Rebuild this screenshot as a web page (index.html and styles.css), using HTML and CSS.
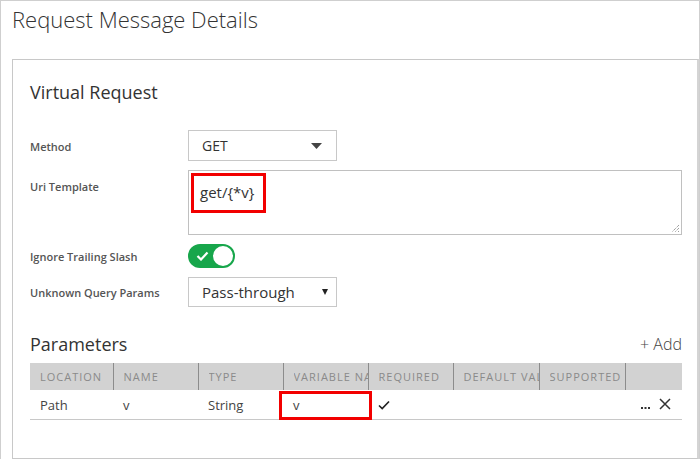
FILE: index.html
```html
<!DOCTYPE html>
<html>
<head>
<meta charset="utf-8">
<link rel="stylesheet" href="styles.css">
</head>
<body>
<div class="frame">
  <div class="page-head"><h1 class="page-title">Request Message Details</h1></div>
  <div class="card">
    <h2 class="section-title">Virtual Request</h2>
    <div class="form">
      <div class="label">Method</div>
      <div class="field">
        <div class="select method">
          <span>GET</span>
          <svg class="caret" width="11" height="6" viewBox="0 0 11 6"><path d="M0 0h11L5.5 6z" fill="#444"/></svg>
        </div>
      </div>
      <div class="label label-top">Uri Template</div>
      <div class="field">
        <div class="textarea">
          <span class="highlight">get/{*v}</span>
          <svg class="grip" width="9" height="9" viewBox="0 0 9 9"><path d="M8 1L1 8M8 4L4 8M8 7L7 8" stroke="#777" stroke-width="1" stroke-dasharray="1 1"/></svg>
        </div>
      </div>
      <div class="label">Ignore Trailing Slash</div>
      <div class="field">
        <div class="toggle">
          <svg class="tick" width="13" height="10" viewBox="0 0 13 10"><path d="M1.5 5l3.5 3.5L11.5 1.5" fill="none" stroke="#fff" stroke-width="2.2"/></svg>
          <span class="knob"></span>
        </div>
      </div>
      <div class="label">Unknown Query Params</div>
      <div class="field">
        <div class="select passthrough">
          <span>Pass-through</span>
          <svg class="caret-small" width="6" height="6" viewBox="0 0 6 6"><path d="M0 0h6L3 6z" fill="#222"/></svg>
        </div>
      </div>
    </div>
    <div class="params-head">
      <h2 class="section-title params-title">Parameters</h2>
      <span class="add">+ Add</span>
    </div>
    <table class="params">
      <colgroup>
        <col class="c1"><col class="c2"><col class="c2"><col class="c2"><col class="c2"><col class="c3"><col class="c3"><col class="c4">
      </colgroup>
      <thead>
        <tr>
          <th><span class="hd">LOCATION</span></th><th><span class="hd">NAME</span></th><th><span class="hd">TYPE</span></th><th><span class="hd">VARIABLE NAME</span></th><th><span class="hd">REQUIRED</span></th><th><span class="hd">DEFAULT VALUE</span></th><th><span class="hd">SUPPORTED</span></th><th class="last"></th>
        </tr>
      </thead>
      <tbody>
        <tr>
          <td>Path</td><td>v</td><td>String</td><td class="marked">v</td>
          <td><svg width="12" height="10" viewBox="0 0 12 10"><path d="M1 5.5l3.2 3L11 1.5" fill="none" stroke="#222" stroke-width="1.7"/></svg></td>
          <td></td><td></td>
          <td class="actions">
            <svg width="9" height="4" viewBox="0 0 9 4"><rect x="0" y="1" width="2" height="2" fill="#333"/><rect x="3.5" y="1" width="2" height="2" fill="#333"/><rect x="7" y="1" width="2" height="2" fill="#333"/></svg>
            <svg width="12" height="12" viewBox="0 0 12 12"><path d="M1 1l10 10M11 1L1 11" stroke="#333" stroke-width="1.5"/></svg>
          </td>
        </tr>
      </tbody>
    </table>
  </div>
</div>
</body>
</html>
```
FILE: styles.css
```css
html, body {
  margin: 0;
  padding: 0;
  background: #fff;
}
body {
  font-family: "Open Sans", "Noto Sans", sans-serif;
  color: #333;
}
.frame {
  width: 700px;
  height: 459px;
  box-sizing: border-box;
  border: 1px solid #cfcfcf;
  border-bottom: none;
  display: flex;
  flex-direction: column;
  overflow: hidden;
}
.page-head {
  height: 58px;
  padding-left: 11px;
}
.page-title {
  margin: 0;
  font-weight: 300;
  font-size: 22px;
  line-height: 30px;
  padding-top: 3px;
  color: #333;
}
.card {
  flex: 1;
  margin-left: 11px;
  border: 1px solid #c8c8c8;
  border-right: 2px solid #d4d4d4;
  padding: 19px 15px 0 17px;
}
.section-title {
  margin: 0;
  font-weight: 400;
  font-size: 18px;
  line-height: 26px;
  color: #333;
}
.form {
  margin-top: 25px;
  display: grid;
  grid-template-columns: 158px 1fr;
  grid-template-rows: 31px 65px 24px 30px;
  row-gap: 9px;
}
.label {
  font-size: 11px;
  font-weight: 600;
  color: #555;
  display: flex;
  align-items: center;
  padding-top: 1px;
}
.label-top {
  align-items: flex-start;
  padding-top: 9px;
}
.select {
  width: 149px;
  height: 31px;
  box-sizing: border-box;
  border: 1px solid #c8c8c8;
  display: flex;
  align-items: center;
  justify-content: space-between;
  padding: 0 14px 0 13px;
  font-size: 14px;
  color: #333;
}
.passthrough {
  height: 30px;
  font-size: 15px;
  padding-right: 8px;
}
.textarea {
  position: relative;
  height: 65px;
  box-sizing: border-box;
  border: 1px solid #c0c0c0;
  padding: 2px;
}
.highlight {
  display: inline-block;
  border: 3px solid #f20000;
  height: 40px;
  box-sizing: border-box;
  line-height: 33px;
  padding: 0 9px 0 6px;
  font-size: 15px;
  color: #333;
}
.grip {
  position: absolute;
  right: 1px;
  bottom: 1px;
}
.toggle {
  width: 47px;
  height: 24px;
  border-radius: 12px;
  background: #17a64b;
  display: flex;
  align-items: center;
  justify-content: space-between;
  padding: 0 2px 0 8px;
  box-sizing: border-box;
}
.knob {
  width: 20px;
  height: 20px;
  border-radius: 50%;
  background: #fff;
}
.params-head {
  margin-top: 24px;
  display: flex;
  justify-content: space-between;
  align-items: center;
}
.add {
  font-size: 16px;
  font-weight: 300;
  color: #444;
}
.params {
  margin-top: 6px;
  width: 100%;
  border-collapse: collapse;
  table-layout: fixed;
}
.c1 { width: 83px; }
.c2 { width: 85px; }
.c3 { width: 86px; }
.c4 { width: auto; }
.params th {
  background: #d2d2d2;
  height: 27px;
  padding: 0 0 0 10px;
  text-align: left;
  font-size: 11px;
  font-weight: 400;
  letter-spacing: 1px;
  color: #8a8a8a;
  border-right: 1px solid #8c8c8c;
  white-space: nowrap;
  overflow: hidden;
}
.params th .hd {
  display: block;
  overflow: hidden;
  white-space: nowrap;
}
.params th.last {
  border-right: none;
}
.params td {
  height: 29px;
  padding: 0 0 0 10px;
  font-size: 13px;
  color: #444;
  border-bottom: 1px solid #c8c8c8;
  white-space: nowrap;
}
.params td.marked {
  position: relative;
}
.params td.marked::after {
  content: "";
  position: absolute;
  left: -4px;
  right: -4px;
  top: 1px;
  bottom: -1px;
  border: 3px solid #f20000;
}
.params td.actions {
  text-align: right;
  padding-right: 19px;
}
.actions svg {
  margin-left: 6px;
}
```
